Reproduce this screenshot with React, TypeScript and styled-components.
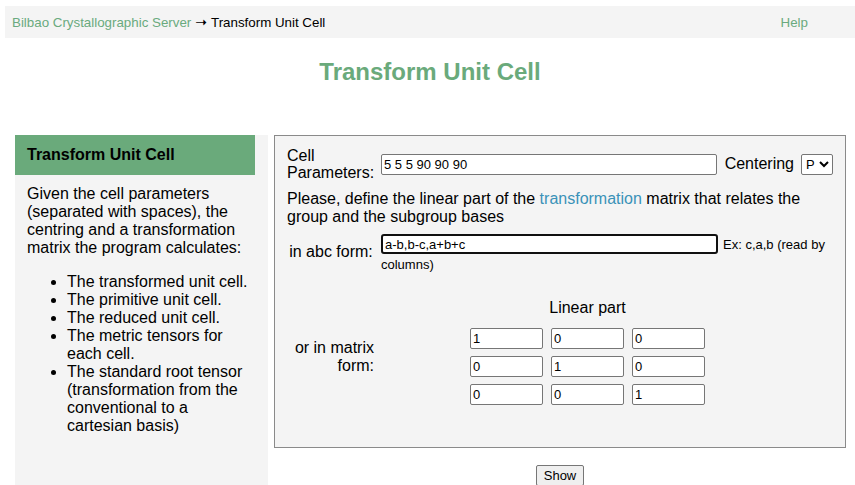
import React from "react";
import styled, { createGlobalStyle } from "styled-components";

const Global = createGlobalStyle`
  html, body { margin: 0; padding: 0; background: #fff; }
  body { font-family: "Liberation Sans", Arial, sans-serif; color: #000; }
  * { box-sizing: border-box; }
`;

const Page = styled.div`
  width: 855px;
  height: 485px;
  overflow: hidden;
  padding-top: 6px;
`;

const Nav = styled.nav`
  margin-left: 5px;
  height: 32px;
  background: #f4f4f4;
  display: flex;
  align-items: center;
  justify-content: space-between;
  padding: 0 47px 0 7px;
  font-size: 13.33px;
`;

const Crumbs = styled.div`
  display: flex;
  align-items: center;
  gap: 4px;
`;

const Arrow = styled.span`
  font-weight: bold;
  font-family: "DejaVu Sans", sans-serif;
  font-size: 14px;
`;

const NavLink = styled.a`
  color: #6aaa7e;
  text-decoration: none;
`;

const Title = styled.h1`
  margin: 20px 0 49px 5px;
  text-align: center;
  font-size: 24px;
  line-height: 28px;
  font-weight: bold;
  color: #6aaa7b;
`;

const Main = styled.div`
  display: flex;
  gap: 6px;
  padding-left: 15px;
  align-items: flex-start;
`;

const Sidebar = styled.aside`
  width: 253px;
  min-height: 360px;
  background: #f4f4f4;
  font-size: 16px;
  line-height: 18px;
`;

const SideHead = styled.div`
  width: 240px;
  height: 40px;
  background: #6aaa7b;
  display: flex;
  align-items: center;
  padding-left: 12px;
  font-weight: bold;
  font-size: 16px;
`;

const SideBody = styled.div`
  padding: 10px 13px 0 12px;
  p { margin: 0; }
  ul { margin: 16px 0; padding-left: 40px; }
`;

const Column = styled.div`
  display: flex;
  flex-direction: column;
  align-items: center;
`;

const Panel = styled.div`
  width: 572px;
  background: #f4f4f4;
  border: 1px solid #8a8a8a;
  padding: 11px 12px 42px 12px;
  font-size: 16px;
  line-height: 18px;
`;

const Row = styled.div<{ $mt?: number }>`
  display: flex;
  align-items: center;
  margin-top: ${(p) => p.$mt ?? 0}px;
`;

const Label = styled.div<{ $align?: string; $pr?: number; $lh?: number; $pt?: number; $pb?: number }>`
  width: 94px;
  flex: none;
  line-height: ${(p) => p.$lh ?? 17}px;
  text-align: ${(p) => p.$align ?? "left"};
  padding: ${(p) => p.$pt ?? 0}px ${(p) => p.$pr ?? 0}px ${(p) => p.$pb ?? 0}px 0;
`;

const TextInput = styled.input<{ $w: number; $focus?: boolean }>`
  width: ${(p) => p.$w}px;
  height: ${(p) => (p.$focus ? 20 : 21)}px;
  font-family: "Liberation Sans", Arial, sans-serif;
  font-size: 13px;
  padding: 1px 2px;
  background: #fff;
  color: #000;
  border: ${(p) => (p.$focus ? "2px solid #101010" : "1px solid #767676")};
  border-radius: ${(p) => (p.$focus ? 3 : 2)}px;
  outline: none;
`;

const Centering = styled.span`
  margin: 0 7px 0 8px;
`;

const Select = styled.select`
  width: 32px;
  height: 21px;
  font-family: "Liberation Sans", Arial, sans-serif;
  font-size: 13px;
  border: 1px solid #767676;
  border-radius: 2px;
  background: #fff;
  padding: 0;
`;

const Para = styled.p`
  margin: 9px 0 0 0;
`;

const Link = styled.a`
  color: #3a92b8;
  text-decoration: none;
`;

const AbcCell = styled.div`
  flex: 1;
  font-size: 13px;
  line-height: 20px;
`;

const Hint = styled.span`
  margin-left: 5px;
`;

const MatrixBlock = styled.div`
  margin-left: 89px;
  display: flex;
  flex-direction: column;
  align-items: center;
`;

const MatrixHead = styled.div`
  margin-bottom: 11px;
`;

const Matrix = styled.div`
  display: grid;
  grid-template-columns: repeat(3, 73px);
  column-gap: 8px;
  row-gap: 7px;
`;

const Button = styled.button`
  margin-top: 17px;
  font-family: "Liberation Sans", Arial, sans-serif;
  font-size: 13px;
  height: 21px;
  padding: 0 7px;
  background: #efefef;
  border: 1px solid #767676;
  border-radius: 2px;
  color: #000;
`;

const matrix = ["1", "0", "0", "0", "1", "0", "0", "0", "1"];

export default function App() {
  return (
    <Page>
      <Global />
      <Nav>
        <Crumbs>
          <NavLink href="#">Bilbao Crystallographic Server</NavLink>
          <Arrow>➝</Arrow>
          <span>Transform Unit Cell</span>
        </Crumbs>
        <NavLink href="#">Help</NavLink>
      </Nav>
      <Title>Transform Unit Cell</Title>
      <Main>
        <Sidebar>
          <SideHead>Transform Unit Cell</SideHead>
          <SideBody>
            <p>
              Given the cell parameters (separated with spaces), the centring and a
              transformation matrix the program calculates:
            </p>
            <ul>
              <li>The transformed unit cell.</li>
              <li>The primitive unit cell.</li>
              <li>The reduced unit cell.</li>
              <li>The metric tensors for each cell.</li>
              <li>The standard root tensor (transformation from the conventional to a cartesian basis)</li>
            </ul>
          </SideBody>
        </Sidebar>
        <Column>
          <Panel>
            <Row>
              <Label>
                Cell
                <br />
                Parameters:
              </Label>
              <TextInput $w={337} defaultValue="5 5 5 90 90 90" />
              <Centering>Centering</Centering>
              <Select defaultValue="P">
                <option>P</option>
                <option>A</option>
                <option>B</option>
                <option>C</option>
                <option>I</option>
                <option>F</option>
                <option>R</option>
              </Select>
            </Row>
            <Para>
              Please, define the linear part of the <Link href="#">transformation</Link> matrix
              that relates the group and the subgroup bases
            </Para>
            <Row $mt={8}>
              <Label $align="center" $pr={6} $pb={6}>in abc form:</Label>
              <AbcCell>
                <TextInput $w={337} $focus defaultValue="a-b,b-c,a+b+c" />
                <Hint>Ex: c,a,b (read by columns)</Hint>
              </AbcCell>
            </Row>
            <Row $mt={24}>
              <Label $align="right" $pr={7} $lh={18} $pt={10}>or in matrix form:</Label>
              <MatrixBlock>
                <MatrixHead>Linear part</MatrixHead>
                <Matrix>
                  {matrix.map((v, i) => (
                    <TextInput key={i} $w={73} defaultValue={v} />
                  ))}
                </Matrix>
              </MatrixBlock>
            </Row>
          </Panel>
          <Button>Show</Button>
        </Column>
      </Main>
    </Page>
  );
}
